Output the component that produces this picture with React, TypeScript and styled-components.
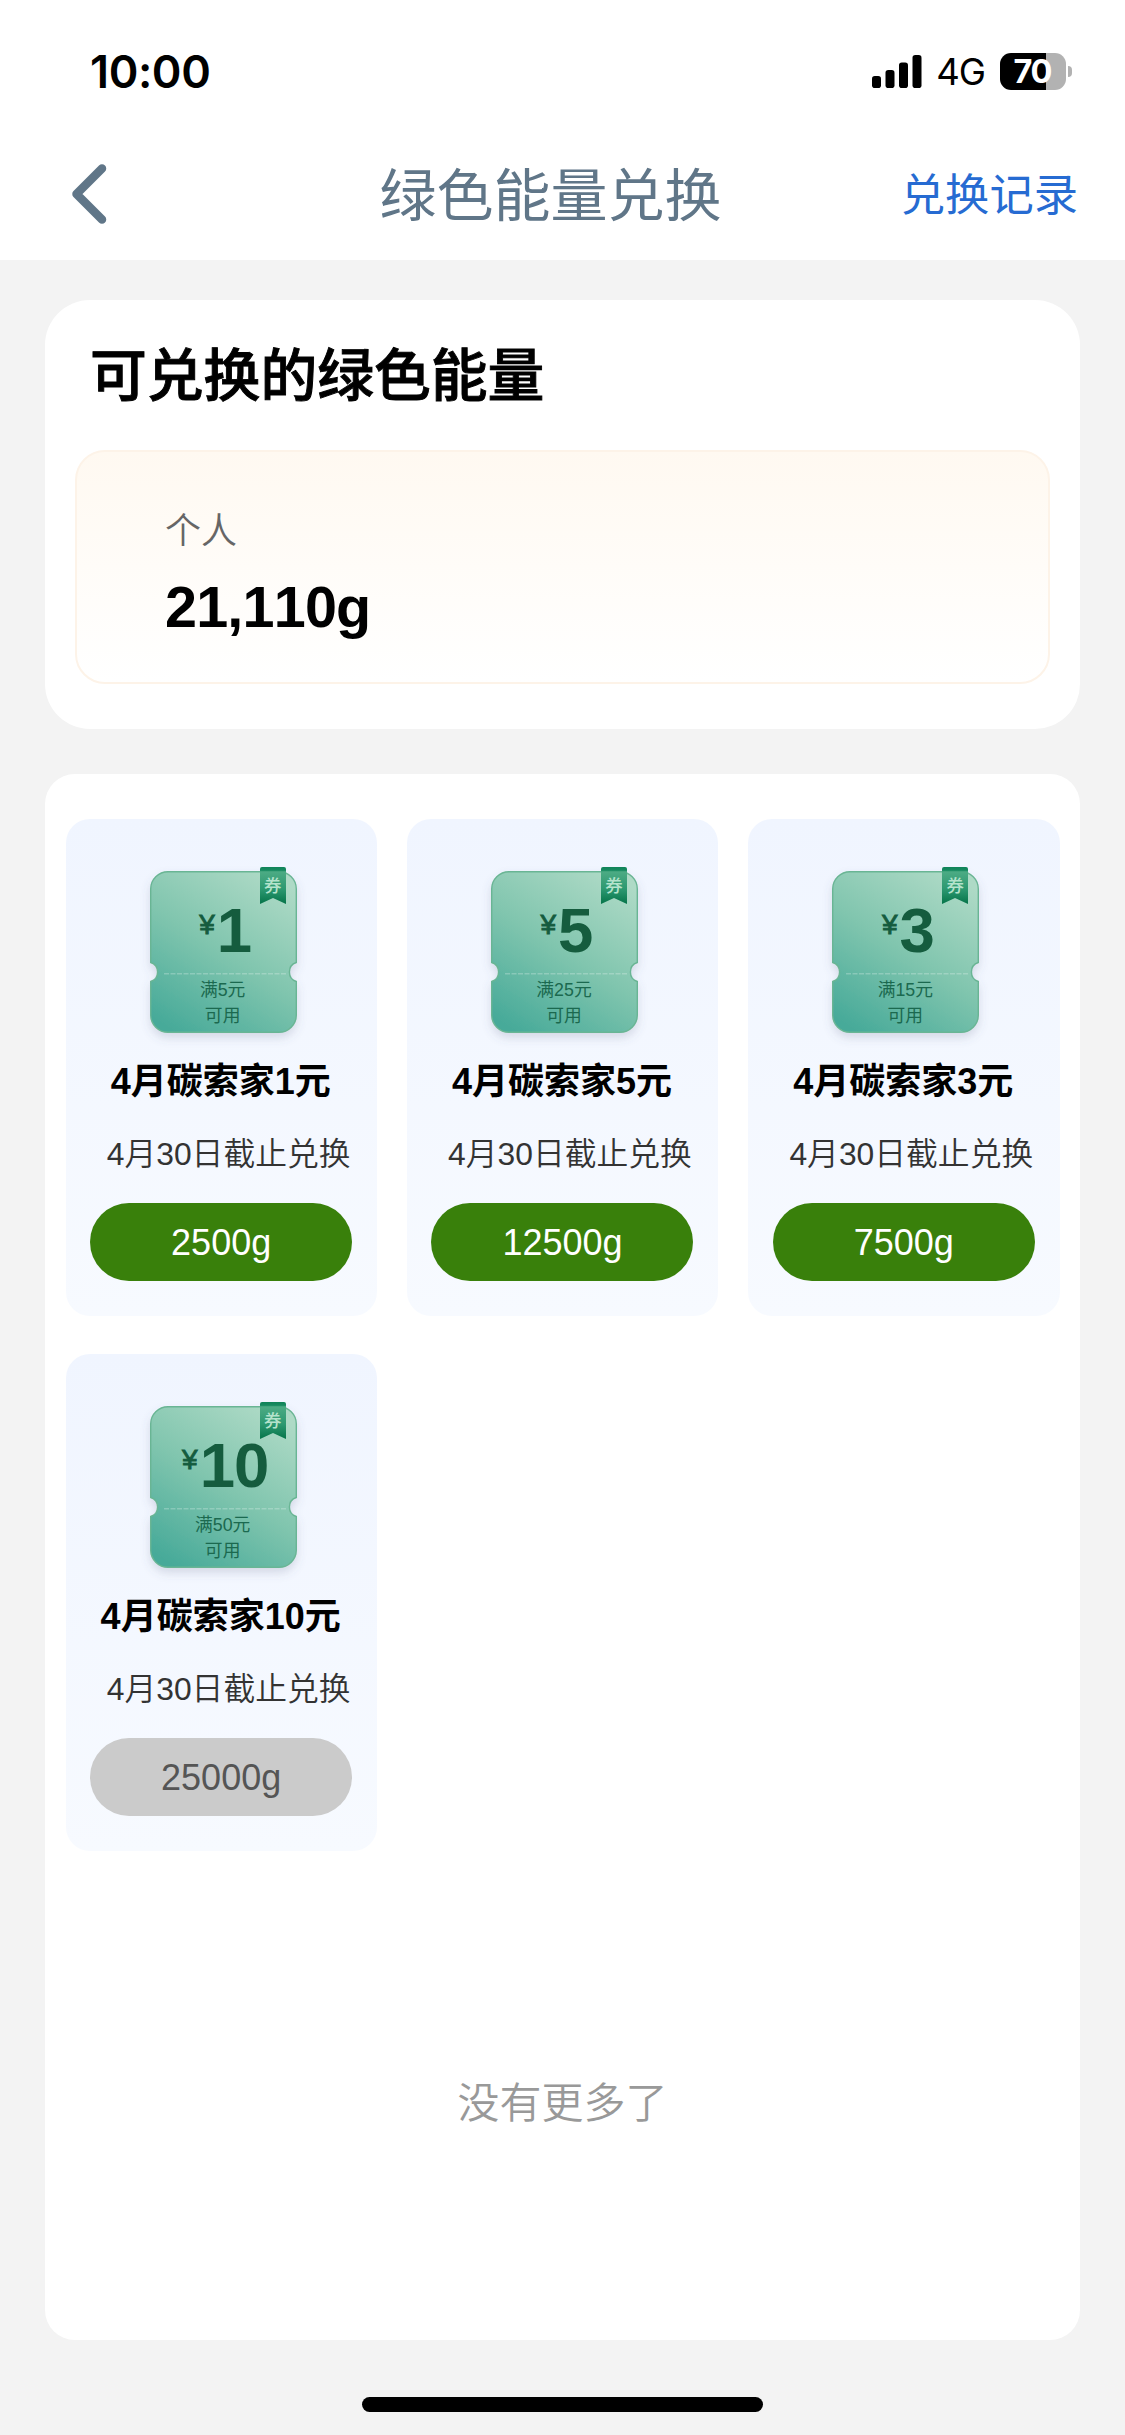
import React from 'react';
import styled, { createGlobalStyle } from 'styled-components';

const sans = `"Liberation Sans", "Noto Sans CJK SC", sans-serif`;
const cjk = `"Noto Sans CJK SC", sans-serif`;

const GlobalStyle = createGlobalStyle`
  * { box-sizing: border-box; }
  body {
    margin: 0;
    background: #f3f3f3;
    font-family: ${sans};
    font-kerning: none;
  }
  button { border: 0; padding: 0; background: none; font: inherit; }
  h1, h2, h3, p { margin: 0; }
`;

const Screen = styled.div`
  width: 1125px;
  height: 2435px;
  display: flex;
  flex-direction: column;
  background: #f3f3f3;
  overflow: hidden;
`;

const StatusBar = styled.div`
  height: 130px;
  padding: 12px 53px 0 90px;
  display: flex;
  align-items: center;
  justify-content: space-between;
  background: #fff;
`;

const Clock = styled.span`
  margin-top: 1px;
  font-family: Inter, sans-serif;
  font-weight: 600;
  font-size: 45px;
  letter-spacing: -0.4px;
  color: #000;
`;

const StatusIcons = styled.div`
  display: flex;
  align-items: center;
`;

const Network = styled.span`
  margin: 2px 15px 0 14px;
  font-family: Inter, sans-serif;
  font-size: 36.5px;
  line-height: 40px;
  letter-spacing: -1px;
  color: #000;
`;

const Battery = styled.div`
  width: 66px;
  height: 37px;
  border-radius: 11px;
  display: flex;
  align-items: center;
  justify-content: center;
  padding-right: 2px;
  background: linear-gradient(to right, #000 70%, #b2b2b2 70%);
  font-family: Inter, sans-serif;
  font-weight: 700;
  font-size: 32.5px;
  line-height: 37px;
  letter-spacing: -1.8px;
  color: #fff;
`;

const BatteryTip = styled.div`
  width: 4px;
  height: 11px;
  margin-left: 2px;
  border-radius: 0 5px 5px 0;
  background: #b2b2b2;
`;

const NavBar = styled.header`
  height: 130px;
  padding: 0 46px 0 72px;
  display: grid;
  grid-template-columns: 200px 1fr 200px;
  align-items: center;
  background: #fff;
`;

const BackButton = styled.button`
  display: flex;
  height: 60px;
  margin-bottom: 2px;
`;

const PageTitle = styled.h1`
  margin: 0 0 8px -50px;
  font-family: ${cjk};
  font-weight: 400;
  font-size: 57px;
  line-height: 80px;
  text-align: center;
  color: #607688;
`;

const HistoryLink = styled.button`
  font-family: ${cjk};
  font-size: 44.3px;
  line-height: 60px;
  margin: 0 1px 7px 0;
  text-align: right;
  white-space: nowrap;
  color: #266bd2;
`;

const Content = styled.main`
  padding: 40px 45px 0;
  display: flex;
  flex-direction: column;
  gap: 45px;
`;

const BalanceCard = styled.section`
  height: 429px;
  padding: 31px 30px 45px;
  border-radius: 45px;
  background: #fff;
`;

const BalanceHeading = styled.h2`
  height: 119px;
  padding-left: 15px;
  font-family: ${cjk};
  font-weight: 500;
  font-size: 56.8px;
  line-height: 80px;
  -webkit-text-stroke: 0.9px #000;
  color: #000;
`;

const BalancePanel = styled.div`
  height: 234px;
  padding: 55px 88px 0;
  border: 2px solid #fdf3e8;
  border-radius: 30px;
  background: linear-gradient(#fff9f1, #fffcf8 50%, #fff);
`;

const AccountName = styled.p`
  font-weight: 350;
  font-size: 36px;
  line-height: 50px;
  color: #666;
`;

const Amount = styled.p`
  margin-top: 11px;
  font-weight: 700;
  font-size: 57.5px;
  line-height: 78px;
  letter-spacing: -0.8px;
  color: #000;
`;

const CouponCard = styled.section`
  height: 1566px;
  padding: 45px 20.5px 0;
  border-radius: 30px;
  background: #fff;
`;

const CouponGrid = styled.div`
  display: grid;
  grid-template-columns: repeat(3, minmax(0, 1fr));
  gap: 38px 30px;
`;

const Tile = styled.article`
  height: 497px;
  padding: 48px 24px 0;
  display: flex;
  flex-direction: column;
  align-items: center;
  border-radius: 24px;
  background: linear-gradient(#f0f5ff, #f7faff);
`;

const Ticket = styled.div`
  position: relative;
  width: 147px;
  height: 166px;
  margin-left: 4px;
  padding-top: 27.5px;
`;

const TicketArt = styled.svg`
  position: absolute;
  left: 0;
  top: 0;
  overflow: visible;
`;

const RibbonLabel = styled.span`
  position: absolute;
  left: 110px;
  top: 5.5px;
  width: 26px;
  font-family: ${cjk};
  font-weight: 500;
  font-size: 17.5px;
  line-height: 24px;
  text-align: center;
  color: #b4e3cc;
`;

const Price = styled.div`
  position: relative;
  display: flex;
  justify-content: center;
  gap: 2px;
  padding-left: 4px;
  font-weight: 700;
  font-size: 63.5px;
  line-height: 70px;
  letter-spacing: -1px;
  color: #155c3e;
`;

const Currency = styled.span`
  margin-top: 16px;
  font-weight: 400;
  font-size: 28px;
  line-height: 28px;
  letter-spacing: 0;
  -webkit-text-stroke: 0.9px #155c3e;
`;

const Terms = styled.p`
  position: relative;
  margin-top: 12.5px;
  padding-right: 1px;
  font-size: 17.8px;
  line-height: 26px;
  text-align: center;
  color: #1b694f;
`;

const TileTitle = styled.h3`
  margin-top: 23.5px;
  padding-right: 1px;
  font-weight: 700;
  font-size: 36px;
  line-height: 50px;
  white-space: nowrap;
  color: #000;
`;

const Deadline = styled.p`
  margin-top: 25px;
  padding-left: 15px;
  font-weight: 350;
  font-size: 31.8px;
  line-height: 44px;
  white-space: nowrap;
  color: #333;
`;

const RedeemButton = styled.button<{ $disabled: boolean }>`
  width: 262px;
  height: 78px;
  flex: none;
  margin-top: 27.5px;
  padding-top: 1px;
  border-radius: 39px;
  font-size: 36px;
  line-height: 78px;
  text-align: center;
  background: ${(p) => (p.$disabled ? '#cbcbcb' : '#39800b')};
  color: ${(p) => (p.$disabled ? '#555' : '#fff')};
`;

const EndNote = styled.p`
  margin-top: 219px;
  font-family: ${cjk};
  font-weight: 350;
  font-size: 42px;
  line-height: 60px;
  text-align: center;
  color: #999;
`;

const HomeIndicator = styled.div`
  width: 401px;
  height: 15px;
  margin: 57px auto 0;
  border-radius: 8px;
  background: #000;
`;

interface Coupon {
  value: number;
  minimum: number;
  cost: number;
}

const BALANCE = 21110;

const coupons: Coupon[] = [
  { value: 1, minimum: 5, cost: 2500 },
  { value: 5, minimum: 25, cost: 12500 },
  { value: 3, minimum: 15, cost: 7500 },
  { value: 10, minimum: 50, cost: 25000 },
];

const SignalIcon = () => (
  <svg width="50" height="33" viewBox="0 0 50 33">
    <rect x="0" y="21" width="9" height="12" rx="2.8" />
    <rect x="13.5" y="15" width="9" height="18" rx="2.8" />
    <rect x="27" y="7.5" width="9" height="25.5" rx="2.8" />
    <rect x="40.5" y="0" width="9" height="33" rx="2.8" />
  </svg>
);

const BackIcon = () => (
  <svg width="35" height="60" viewBox="0 0 35 60" fill="none">
    <path
      d="M30 4.5 4.5 30 30 55.5"
      stroke="#607688"
      strokeWidth="8.5"
      strokeLinecap="round"
      strokeLinejoin="round"
    />
  </svg>
);

const TicketBackground = ({ id }: { id: string }) => (
  <TicketArt width="147" height="166" viewBox="0 0 147 166">
    <defs>
      <linearGradient id={`${id}-body`} gradientUnits="userSpaceOnUse" x1="18" y1="160" x2="117" y2="5">
        <stop offset="0" stopColor="#47aa99" />
        <stop offset="0.5" stopColor="#80c5ae" />
        <stop offset="1" stopColor="#aedac6" />
      </linearGradient>
      <linearGradient id={`${id}-ribbon`} x1="0" y1="0" x2="0" y2="1">
        <stop offset="0" stopColor="#0f8358" />
        <stop offset="0.09" stopColor="#178a60" />
        <stop offset="0.13" stopColor="#4cab84" />
        <stop offset="0.6" stopColor="#2c9870" />
        <stop offset="1" stopColor="#057449" />
      </linearGradient>
      <filter id={`${id}-shadow`} x="-20%" y="-20%" width="140%" height="150%">
        <feDropShadow dx="0" dy="5" stdDeviation="5" floodColor="#5b5f85" floodOpacity="0.2" />
      </filter>
    </defs>
    <path
      d="M18 4.7H129A17.3 17.3 0 0 1 146.3 22V95.5A10 10 0 0 0 146.3 114.5V148A17.3 17.3 0 0 1 129 165.3H18A17.3 17.3 0 0 1 .7 148V114.5A10 10 0 0 0 .7 95.5V22A17.3 17.3 0 0 1 18 4.7Z"
      fill={`url(#${id}-body)`}
      stroke="#69b594"
      strokeWidth="1.4"
      filter={`url(#${id}-shadow)`}
    />
    <path d="M14 106.7H136" stroke="#fff" strokeOpacity="0.24" strokeWidth="1.6" strokeDasharray="5 1.5" />
    <path d="M110 2Q110 0 112 0H134Q136 0 136 2V37L123 31L110 37Z" fill={`url(#${id}-ribbon)`} />
  </TicketArt>
);

const CouponTile = ({ value, minimum, cost }: Coupon) => (
  <Tile>
    <Ticket>
      <TicketBackground id={`ticket-${value}`} />
      <RibbonLabel>券</RibbonLabel>
      <Price>
        <Currency>¥</Currency>
        {value}
      </Price>
      <Terms>
        满{minimum}元
        <br />
        可用
      </Terms>
    </Ticket>
    <TileTitle>4月碳索家{value}元</TileTitle>
    <Deadline>4月30日截止兑换</Deadline>
    <RedeemButton $disabled={cost > BALANCE}>{cost}g</RedeemButton>
  </Tile>
);

export default function App() {
  return (
    <>
      <GlobalStyle />
      <Screen>
        <StatusBar>
          <Clock>10:00</Clock>
          <StatusIcons>
            <SignalIcon />
            <Network>4G</Network>
            <Battery>70</Battery>
            <BatteryTip />
          </StatusIcons>
        </StatusBar>
        <NavBar>
          <BackButton aria-label="返回">
            <BackIcon />
          </BackButton>
          <PageTitle>绿色能量兑换</PageTitle>
          <HistoryLink>兑换记录</HistoryLink>
        </NavBar>
        <Content>
          <BalanceCard>
            <BalanceHeading>可兑换的绿色能量</BalanceHeading>
            <BalancePanel>
              <AccountName>个人</AccountName>
              <Amount>{BALANCE.toLocaleString('en-US')}g</Amount>
            </BalancePanel>
          </BalanceCard>
          <CouponCard>
            <CouponGrid>
              {coupons.map((coupon) => (
                <CouponTile key={coupon.value} {...coupon} />
              ))}
            </CouponGrid>
            <EndNote>没有更多了</EndNote>
          </CouponCard>
        </Content>
        <HomeIndicator />
      </Screen>
    </>
  );
}
